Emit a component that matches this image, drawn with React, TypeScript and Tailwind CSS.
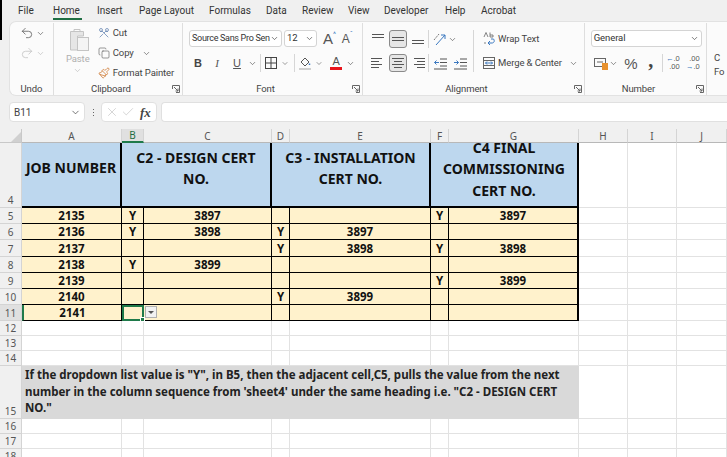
import React from 'react';
import { ChevronDown, Check, X, Undo2, Redo2, Scissors, Copy, Paintbrush } from 'lucide-react';

const tabs = ['File', 'Home', 'Insert', 'Page Layout', 'Formulas', 'Data', 'Review', 'View', 'Developer', 'Help', 'Acrobat'];
const tabWidths = ['w-[35px]', 'w-[44px]', 'w-[42px]', 'w-[70px]', 'w-[57px]', 'w-[36px]', 'w-[46px]', 'w-[36px]', 'w-[61px]', 'w-[36px]', 'w-[44px]'];

const columns = ['A', 'B', 'C', 'D', 'E', 'F', 'G', 'H', 'I', 'J'];

// row number, job, c2 flag, c2 cert, c3 flag, c3 cert, c4 flag, c4 cert
const rows: [number, string, string, string, string, string, string, string][] = [
    [5, '2135', 'Y', '3897', '', '', 'Y', '3897'],
    [6, '2136', 'Y', '3898', 'Y', '3897', '', ''],
    [7, '2137', '', '', 'Y', '3898', 'Y', '3898'],
    [8, '2138', 'Y', '3899', '', '', '', ''],
    [9, '2139', '', '', '', '', 'Y', '3899'],
    [10, '2140', '', '', 'Y', '3899', '', ''],
    [11, '2141', '', '', '', '', '', ''],
];

const Chev = ({ light }: { light?: boolean }) => (
    <ChevronDown size={9} strokeWidth={1.6} className={light ? 'text-[#b5b5b5]' : 'text-[#444444]'} />
);

const Slot = ({ w, children }: { w: string; children: React.ReactNode }) => (
    <div className={`flex shrink-0 items-center justify-center ${w}`}>{children}</div>
);

const Lines = ({ spec, w = 16 }: { spec: [number, number, number][]; w?: number }) => (
    <svg width={w} height="14" viewBox={`0 0 ${w} 14`} fill="none" stroke="#555555" strokeWidth="1">
        {spec.map(([x1, x2, y], i) => (
            <line key={i} x1={x1} x2={x2} y1={y + 0.5} y2={y + 0.5} />
        ))}
    </svg>
);

const Launcher = () => (
    <svg width="8" height="8" viewBox="0 0 8 8" fill="none" stroke="#666666" strokeWidth="1">
        <path d="M0.5 4V0.5H7.5V7.5H4" />
        <path d="M2 2L6 6M6 3.5V6H3.5" />
    </svg>
);

const Active = ({ children, on }: { children: React.ReactNode; on?: boolean }) => (
    <div className={`flex h-[18px] w-[18px] shrink-0 items-center justify-center rounded-[3px] ${on ? 'border border-[#8a8a8a] bg-[#e6e6e6]' : ''}`}>
        {children}
    </div>
);

const Divider = ({ h = 'h-[18px]', m = 'mx-[5px]' }: { h?: string; m?: string }) => <div className={`w-px shrink-0 bg-[#d6d6d6] ${h} ${m}`} />;

const Group = ({ w, label, children, launcher = true }: { w: string; label: string; children: React.ReactNode; launcher?: boolean }) => (
    <div className={`flex h-full flex-col border-r border-[#dedede] ${w}`}>
        <div className="flex-1 overflow-hidden">{children}</div>
        <div className={`relative h-[12px] text-center leading-[12px] text-[#444444] ${launcher ? 'pr-[14px]' : ''}`}>
            {label}
            {launcher && (
                <div className="absolute right-[2px] top-[2px]">
                    <Launcher />
                </div>
            )}
        </div>
    </div>
);

const Combo = ({ w, text, c = '' }: { w: string; text: string; c?: string }) => (
    <div className={`flex h-[17px] shrink-0 items-center justify-between rounded-[3px] border border-[#d4d4d4] bg-white pl-[2px] pr-[2px] text-[#333333] ${w}`}>
        <span className={`whitespace-nowrap ${c}`}>{text}</span>
        <ChevronDown size={9} strokeWidth={2} className="shrink-0 text-[#555555]" />
    </div>
);

const Ribbon = () => (
    <div className="ml-[9px] mt-px flex h-[75px] rounded-l-[7px] border border-r-0 border-[#e2e2e2] bg-[#fbfbfb] pt-[1px] font-['Roboto',sans-serif] text-[9.5px] tracking-[-0.1px] text-[#333333]">
        <Group w="w-[44px]" label="Undo" launcher={false}>
            <div className="flex h-[20px] items-center pl-[10px]">
                <Undo2 size={14} strokeWidth={1.3} className="text-[#555555]" />
                <div className="ml-[2px]"><Chev /></div>
            </div>
            <div className="flex h-[20px] items-center pl-[10px]">
                <Redo2 size={14} strokeWidth={1.3} className="text-[#c0c0c0]" />
                <div className="ml-[2px]"><Chev light /></div>
            </div>
        </Group>

        <Group w="w-[130px]" label="Clipboard">
            <div className="flex">
                <div className="ml-[11px] flex w-[26px] flex-col items-center pt-[5px] text-[#b0b0b0]">
                    <svg width="24" height="24" viewBox="0 0 24 24" fill="none" stroke="#c4c4c4">
                        <path d="M4.5 3.5H17.5V8H11.5V22H4.5Z" fill="#e6e6e6" />
                        <path d="M8 3.5V1.5H14V3.5" />
                        <rect x="11.5" y="9.5" width="11" height="13" fill="#f4f4f4" />
                    </svg>
                    <span className="leading-[14px]">Paste</span>
                    <Chev light />
                </div>
                <div className="ml-[7px] flex flex-col text-[#444444]">
                    <div className="flex h-[20px] items-center">
                        <Scissors size={12} strokeWidth={1.3} className="rotate-90 text-[#4a6fa5]" />
                        <span className="ml-[3px]">Cut</span>
                    </div>
                    <div className="flex h-[20px] items-center">
                        <Copy size={12} strokeWidth={1.2} className="text-[#555555]" />
                        <span className="ml-[3px] mr-[8px]">Copy</span>
                        <Chev />
                    </div>
                    <div className="flex h-[20px] items-center">
                        <Paintbrush size={12} strokeWidth={1.4} className="text-[#c96a1c]" />
                        <span className="ml-[3px] whitespace-nowrap">Format Painter</span>
                    </div>
                </div>
            </div>
        </Group>

        <Group w="w-[181px]" label="Font">
            <div className="flex items-center pl-[6px] pt-[7px]">
                <Combo w="w-[93px]" text="Source Sans Pro Sen" c="text-[9px] tracking-[-0.3px]" />
                <div className="w-[2px]" />
                <Combo w="w-[33px]" text="12" />
                <span className="ml-[6px] font-['Liberation_Sans',sans-serif] text-[15px] leading-none text-[#555555]">A</span>
                <span className="mb-[6px] text-[7px] leading-none text-[#3a78c0]">^</span>
                <span className="ml-[6px] font-['Liberation_Sans',sans-serif] text-[12px] leading-none text-[#555555]">A</span>
                <span className="mb-[6px] text-[7px] leading-none text-[#3a78c0]">ˇ</span>
            </div>
            <div className="mt-[6px] flex h-[20px] items-center pl-[6px]">
                <Slot w="w-[18px]"><span className="font-['Liberation_Sans',sans-serif] text-[11px] font-bold text-[#444444]">B</span></Slot>
                <Slot w="w-[20px]"><span className="font-['Liberation_Serif',serif] text-[11px] italic text-[#555555]">I</span></Slot>
                <Slot w="w-[20px]"><span className="font-['Liberation_Sans',sans-serif] text-[11px] text-[#555555] underline">U</span></Slot>
                <Slot w="w-[10px]"><Chev /></Slot>
                <Divider m="ml-[3px]" />
                <Slot w="w-[20px]">
                    <svg width="12" height="12" viewBox="0 0 12 12" fill="none" stroke="#444444" strokeWidth="1">
                        <rect x="0.5" y="0.5" width="11" height="11" />
                        <path d="M6 0.5V11.5M0.5 6H11.5" />
                    </svg>
                </Slot>
                <Slot w="w-[8px]"><Chev /></Slot>
                <Divider m="ml-[5px]" />
                <Slot w="w-[20px]">
                    <svg width="12" height="14" viewBox="0 0 12 14" fill="none">
                        <path d="M2 6L6 2L10 6L6 10Z" stroke="#555555" />
                        <path d="M10.5 7.5V9" stroke="#3a78c0" strokeWidth="1.5" />
                        <rect x="0" y="12" width="12" height="2" fill="#d0d0d0" />
                    </svg>
                </Slot>
                <Slot w="w-[8px]"><Chev /></Slot>
                <Slot w="ml-[5px] w-[16px]">
                    <div className="flex flex-col items-center">
                        <span className="font-['Liberation_Sans',sans-serif] text-[11px] leading-[11px] text-[#555555]">A</span>
                        <div className="h-[3px] w-[12px] bg-[#e8141c]" />
                    </div>
                </Slot>
                <Slot w="w-[12px]"><Chev /></Slot>
            </div>
        </Group>

        <Group w="w-[223px]" label="Alignment">
            <div className="flex pl-[6px] pt-[7px]">
                <div className="flex w-[104px] shrink-0 flex-col">
                    <div className="flex h-[18px] items-center">
                        <Active><Lines spec={[[2, 14, 2], [2, 14, 5]]} /></Active>
                        <div className="w-[2px]" />
                        <Active on><Lines spec={[[2, 14, 5], [2, 14, 8]]} /></Active>
                        <div className="w-[2px]" />
                        <Active><Lines spec={[[2, 14, 8], [2, 14, 11]]} /></Active>
                        <Divider m="ml-[1px] mr-[4px]" />
                        <svg width="14" height="14" viewBox="0 0 14 14" fill="none">
                            <path d="M1 8L6 2" stroke="#777777" strokeDasharray="2 1" />
                            <path d="M3 13L12 3M12 3H8M12 3V7" stroke="#3a78c0" />
                        </svg>
                        <div className="ml-[1px]"><Chev /></div>
                    </div>
                    <div className="mt-[6px] flex h-[18px] items-center">
                        <Active><Lines spec={[[1, 12, 2], [1, 9, 5], [1, 12, 8], [1, 9, 11]]} /></Active>
                        <div className="w-[2px]" />
                        <Active on><Lines spec={[[2, 14, 2], [4, 12, 5], [2, 14, 8], [4, 12, 11]]} /></Active>
                        <div className="w-[2px]" />
                        <Active><Lines spec={[[4, 15, 2], [7, 15, 5], [4, 15, 8], [7, 15, 11]]} /></Active>
                        <Divider m="ml-[1px] mr-[5px]" />
                        <svg width="13" height="14" viewBox="0 0 13 14" fill="none">
                            <path d="M6 3H13M6 6.5H13M6 10H13M0 13H13" stroke="#555555" />
                            <path d="M5 6.5H0.5M2.5 4.5L0.5 6.5L2.5 8.5" stroke="#3a78c0" />
                        </svg>
                        <div className="w-[7px]" />
                        <svg width="13" height="14" viewBox="0 0 13 14" fill="none">
                            <path d="M6 3H13M6 6.5H13M6 10H13M0 13H13" stroke="#555555" />
                            <path d="M0 6.5H4.5M2.5 4.5L4.5 6.5L2.5 8.5" stroke="#3a78c0" />
                        </svg>
                    </div>
                </div>
                <Divider h="h-[42px]" m="mr-[9px]" />
                <div className="flex flex-col">
                    <div className="flex h-[18px] items-center text-[#444444]">
                        <svg width="12" height="14" viewBox="0 0 12 14" fill="none">
                            <path d="M8 7H10.5C12 9 11 11 9 11H5M7 9L5 11L7 13" stroke="#3a78c0" />
                            <path d="M1 5L3 0.5L5 5M7 0.5V5H10V3H7M1 11H3" stroke="#666666" strokeWidth="0.8" />
                        </svg>
                        <span className="ml-[3px]">Wrap Text</span>
                    </div>
                    <div className="mt-[6px] flex h-[18px] items-center text-[#444444]">
                        <svg width="12" height="12" viewBox="0 0 12 12" fill="none">
                            <rect x="0.5" y="0.5" width="11" height="11" stroke="#666666" />
                            <path d="M0.5 3.5H11.5M0.5 8.5H11.5" stroke="#666666" />
                            <path d="M2.5 6H9.5M4 4.5L2.5 6L4 7.5M8 4.5L9.5 6L8 7.5" stroke="#3a78c0" />
                        </svg>
                        <span className="ml-[3px] whitespace-nowrap">Merge &amp; Center</span>
                        <div className="ml-[7px]"><Chev /></div>
                    </div>
                </div>
            </div>
        </Group>

        <Group w="w-[123px]" label="Number">
            <div className="flex flex-col pl-[6px] pt-[7px]">
                <Combo w="w-[111px]" text="General" />
                <div className="mt-[7px] flex h-[18px] items-center pl-[3px]">
                    <Slot w="w-[14px]">
                        <svg width="14" height="13" viewBox="0 0 14 13" fill="none">
                            <rect x="0.5" y="1.5" width="11" height="8" stroke="#666666" />
                            <path d="M3 5H9" stroke="#666666" />
                            <rect x="8" y="6" width="6" height="7" fill="#e8912d" />
                        </svg>
                    </Slot>
                    <Slot w="w-[12px]"><Chev /></Slot>
                    <Slot w="w-[22px]"><span className="font-['Liberation_Sans',sans-serif] text-[15px] leading-none text-[#555555]">%</span></Slot>
                    <Slot w="w-[18px]"><span className="mb-[6px] font-['Liberation_Serif',serif] text-[20px] font-bold leading-none text-[#444444]">,</span></Slot>
                    <Divider m="ml-[2px]" />
                    <Slot w="w-[20px]">
                        <div className="flex flex-col items-end font-['Liberation_Sans',sans-serif] text-[7.5px] leading-[8px] text-[#555555]">
                            <span className="whitespace-nowrap"><span className="text-[#3a78c0]">←</span>.0</span>
                            <span>.00</span>
                        </div>
                    </Slot>
                    <Slot w="w-[20px]">
                        <div className="flex flex-col items-end font-['Liberation_Sans',sans-serif] text-[7.5px] leading-[8px] text-[#555555]">
                            <span>.00</span>
                            <span className="whitespace-nowrap"><span className="text-[#3a78c0]">→</span>.0</span>
                        </div>
                    </Slot>
                </div>
            </div>
        </Group>

        <div className="w-[20px] overflow-hidden whitespace-nowrap pl-[7px] pt-[28px] leading-[14px] text-[#444444]">
            <div>C</div>
            <div>Fo</div>
        </div>
    </div>
);

const FormulaBar = () => (
    <div className="mt-[6px] flex h-[20px] font-['Roboto',sans-serif] text-[#444444]">
        <div className="ml-[9px] flex w-[76px] items-center justify-between rounded-[4px] border border-[#e0e0e0] bg-white pl-[4px] pr-[3px] text-[10px]">
            <span>B11</span>
            <ChevronDown size={11} strokeWidth={1.6} />
        </div>
        <div className="flex w-[16px] flex-col items-center justify-center gap-[2px]">
            <div className="h-px w-px bg-[#666666]" />
            <div className="h-px w-px bg-[#666666]" />
            <div className="h-px w-px bg-[#666666]" />
        </div>
        <div className="flex w-[56px] items-center rounded-[4px] border border-[#e0e0e0] bg-white pl-[3px]">
            <X size={14} strokeWidth={1} className="text-[#b8b8b8]" />
            <Check size={14} strokeWidth={1} className="ml-[2px] text-[#b8b8b8]" />
            <span className="ml-[5px] font-['Liberation_Serif',serif] text-[13px] font-bold italic leading-none">fx</span>
        </div>
        <div className="ml-[4px] flex-1 rounded-l-[4px] border border-r-0 border-[#e0e0e0] bg-white" />
    </div>
);

// gridline cell for the empty parts of the sheet
const Blank = ({ c = '' }: { c?: string }) => <div className={`border-b border-r border-[#e2e2e2] bg-white ${c}`} />;

const RowHead = ({ n, on }: { n: number; on?: boolean }) => (
    <div className={`flex items-end justify-center border-b border-r border-[#d4d4d4] font-['Noto_Sans',sans-serif] text-[10px] leading-[13px] text-[#555555] ${on ? 'bg-[#e0e0e0] text-[#1f6e43]' : 'bg-[#f0f0f0]'}`}>
        {n}
    </div>
);

const Data = ({ v, c = '' }: { v: string; c?: string }) => (
    <div className={`flex items-center justify-center overflow-hidden border-b border-r border-black bg-[#fff2cc] pt-px text-[11.5px] font-bold leading-none text-[#111111] ${c}`}>
        {v}
    </div>
);

const Head = ({ c, children }: { c: string; children: React.ReactNode }) => (
    <div className={`flex items-center justify-center overflow-hidden border-b-2 border-r-2 border-black bg-[#bdd7ee] text-center text-[14px] font-bold leading-[21.5px] text-[#111111] ${c}`}>
        <div>{children}</div>
    </div>
);

const Sheet = () => (
    <div className="mt-[7px] grid grid-cols-[22px_100px_22px_128px_18px_141px_18px_130px_49px_49px_50px] grid-rows-[14px_65px_16px_16px_17px_16px_16px_16px_16px_15px_15px_15px_53px_15px_15px_15px] font-['Noto_Sans',sans-serif] text-[#111111]">
        <div className="flex items-end justify-end border-b border-r border-[#c8c8c8] bg-[#f0f0f0]">
            <div className="h-0 w-0 border-b-[10px] border-l-[10px] border-b-[#d0d0d0] border-l-transparent" />
        </div>
        {columns.map(col => (
            <div
                key={col}
                className={`flex items-center justify-center border-r border-[#d4d4d4] text-[10px] leading-none ${col === 'B' ? 'border-b-2 border-b-[#1f7a4a] bg-[#e0e0e0] text-[#1f6e43]' : 'border-b border-b-[#b8b8b8] bg-[#f0f0f0] text-[#555555]'}`}
            >
                {col}
            </div>
        ))}

        <RowHead n={4} />
        <Head c="pb-[13px]">JOB NUMBER</Head>
        <Head c="col-span-2 px-[14px] pb-[13px]">C2 - DESIGN CERT NO.</Head>
        <Head c="col-span-2 px-[10px] pb-[13px]">C3 - INSTALLATION CERT NO.</Head>
        <Head c="col-span-2 px-[10px] pb-[11px]">C4 FINAL COMMISSIONING CERT NO.</Head>
        <Blank />
        <Blank />
        <Blank />

        {rows.map(([n, job, b, c, d, e, f, g]) => (
            <React.Fragment key={n}>
                <RowHead n={n} on={n === 11} />
                <Data v={job} c={n === 11 ? 'border-l-2 border-l-[#1f7a4a]' : ''} />
                {n === 11 ? (
                    <div className="relative border-2 border-[#1f7a4a] bg-[#fff2cc]">
                        <div className="absolute -bottom-[3px] -right-[3px] h-[5px] w-[5px] border border-white bg-[#1f7a4a]" />
                        <div className="absolute -right-[15px] -top-px flex h-[12px] w-[12px] items-center justify-center border border-[#b0b0b0] bg-[#f2f2f2]">
                            <div className="h-0 w-0 border-x-[3px] border-t-[3px] border-x-transparent border-t-[#555555]" />
                        </div>
                    </div>
                ) : (
                    <Data v={b} />
                )}
                <Data v={c} />
                <Data v={d} />
                <Data v={e} />
                <Data v={f} />
                <Data v={g} c="border-r-2" />
                <Blank />
                <Blank />
                <Blank />
            </React.Fragment>
        ))}

        {[12, 13, 14].map(n => (
            <React.Fragment key={n}>
                <RowHead n={n} />
                {columns.map(col => <Blank key={col} />)}
            </React.Fragment>
        ))}

        <RowHead n={15} />
        <div className="col-span-7 bg-[#d9d9d9] pl-[3px] pr-[8px] pt-[1px] text-[11.5px] font-bold leading-[16.5px] text-[#222222]">
            If the dropdown list value is "Y", in B5, then the adjacent cell,C5, pulls the value from the next number in the column sequence from 'sheet4' under the same heading i.e. "C2 - DESIGN CERT NO."
        </div>
        <Blank />
        <Blank />
        <Blank />

        {[16, 17, 18].map(n => (
            <React.Fragment key={n}>
                <RowHead n={n} />
                {columns.map(col => <Blank key={col} />)}
            </React.Fragment>
        ))}
    </div>
);

const App: React.FC = () => {
    return (
        <div className="relative h-[457px] w-[727px] overflow-hidden bg-[#f0f0f0]">
            <div className="absolute left-0 top-0 h-[40px] w-[2px] bg-black" />
            <div className="flex h-[20px] items-center pl-[18px] font-['Roboto',sans-serif] text-[10px] text-[#333333]">
                {tabs.map((tab, i) => (
                    <div key={tab} className={`relative shrink-0 whitespace-nowrap ${tabWidths[i]}`}>
                        {tab}
                        {tab === 'Home' && <div className="absolute -bottom-[2px] left-0 h-[2px] w-[29px] bg-[#1f6e43]" />}
                    </div>
                ))}
            </div>
            <Ribbon />
            <FormulaBar />
            <Sheet />
        </div>
    );
};

export default App;
